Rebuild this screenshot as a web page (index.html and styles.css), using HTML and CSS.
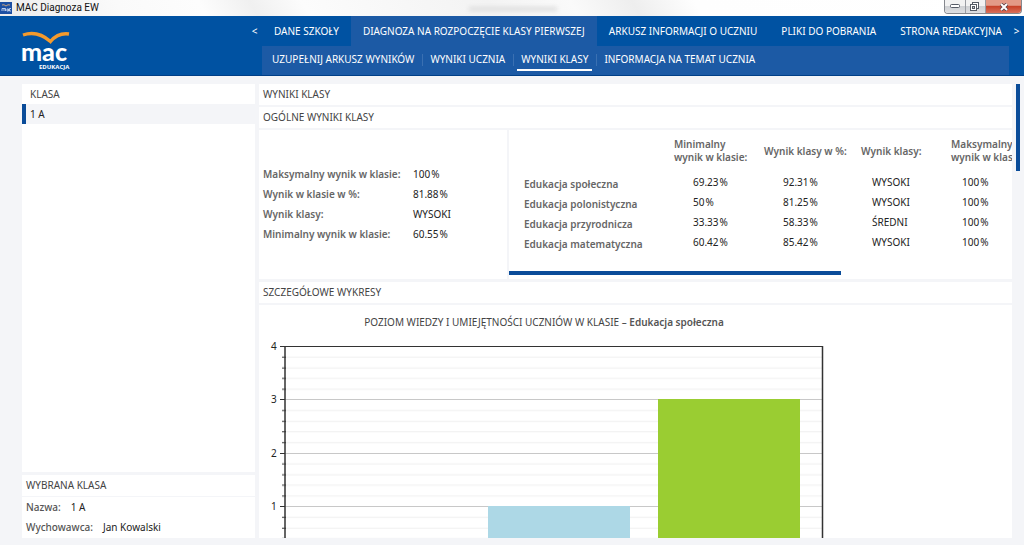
FILE: index.html
```html
<!DOCTYPE html>
<html lang="pl">
<head>
<meta charset="utf-8">
<title>MAC Diagnoza EW</title>
<link rel="stylesheet" href="styles.css">
</head>
<body>
<div class="titlebar">
  <svg class="app-icon" viewBox="0 0 12 12" aria-hidden="true"><rect width="12" height="12" fill="#1c4fa3"/><path d="M2 3q2-1 4 1q2-2 4-1" fill="none" stroke="#c9a27c"/><path d="M2 9V6.500h2V9M4 6.500h1.500V9M7 7h1.500v2H7zM11 6.500H9.500V9H11" fill="none" stroke="#dfe9fa" stroke-width=".8"/></svg>
  <span class="app-name">MAC Diagnoza EW</span>
  <span class="glass-smudge"></span>
  <div class="window-buttons">
    <button class="win-btn" type="button" aria-label="Minimalizuj"><svg width="10" height="5" viewBox="0 0 10 5"><rect x=".5" y=".5" width="9" height="3" rx="1" fill="#fff" stroke="#555b66"/></svg></button>
    <button class="win-btn" type="button" aria-label="Przywróć"><svg width="10" height="10" viewBox="0 0 10 10"><rect x="2.500" y=".5" width="6" height="6" fill="#fff" stroke="#555b66"/><rect x=".5" y="2.500" width="6" height="6" fill="#fff" stroke="#555b66"/><rect x="2.500" y="4.500" width="2" height="2" fill="#ccc" stroke="#555b66"/></svg></button>
    <button class="win-btn win-close" type="button" aria-label="Zamknij"><svg width="10" height="8" viewBox="0 0 10 8"><path d="M2 1l6 6M8 1L2 7" stroke="#5c4146" stroke-width="3.600"/><path d="M2 1l6 6M8 1L2 7" stroke="#fff" stroke-width="2"/></svg></button>
  </div>
</div>

<header class="header">
  <svg class="logo" width="50" height="42" viewBox="0 0 50 42" role="img" aria-label="mac edukacja">
    <path d="M1 4C10 1 20 3 28.500 10.500C34 4 40 2 47 3" fill="none" stroke="#f39a2d" stroke-width="3.400"/>
    <text class="logo-name" x="-1" y="30">mac</text>
    <text class="logo-sub" x="17" y="38">EDUKACJA</text>
  </svg>
  <button class="nav-arrow" type="button" aria-label="Poprzednie">&lt;</button>
  <div class="nav">
    <nav class="nav-main">
      <a href="#">DANE SZKOŁY</a>
      <a href="#" class="active">DIAGNOZA NA ROZPOCZĘCIE KLASY PIERWSZEJ</a>
      <a href="#">ARKUSZ INFORMACJI O UCZNIU</a>
      <a href="#">PLIKI DO POBRANIA</a>
      <a href="#">STRONA REDAKCYJNA</a>
    </nav>
    <nav class="nav-sub">
      <a href="#">UZUPEŁNIJ ARKUSZ WYNIKÓW</a>
      <a href="#">WYNIKI UCZNIA</a>
      <a href="#" class="current">WYNIKI KLASY</a>
      <a href="#">INFORMACJA NA TEMAT UCZNIA</a>
    </nav>
  </div>
  <button class="nav-arrow" type="button" aria-label="Następne">&gt;</button>
</header>

<div class="workspace">
  <aside class="sidebar">
    <section class="class-list">
      <h2 class="list-title">KLASA</h2>
      <a href="#" class="class-item">1 A</a>
    </section>
    <h2 class="bar side-bar">WYBRANA KLASA</h2>
    <dl class="class-info">
      <div><dt>Nazwa:</dt><dd>1 A</dd></div>
      <div><dt>Wychowawca:</dt><dd>Jan Kowalski</dd></div>
    </dl>
  </aside>

  <main class="content">
    <h1 class="bar">WYNIKI KLASY</h1>
    <h2 class="bar">OGÓLNE WYNIKI KLASY</h2>
    <div class="results">
      <dl class="summary">
        <dt>Maksymalny wynik w klasie:</dt><dd>100<span class="pct">%</span></dd>
        <dt>Wynik w klasie w %:</dt><dd>81.88<span class="pct">%</span></dd>
        <dt>Wynik klasy:</dt><dd>WYSOKI</dd>
        <dt>Minimalny wynik w klasie:</dt><dd>60.55<span class="pct">%</span></dd>
      </dl>
      <div class="details">
        <table class="scores">
          <thead>
            <tr><td class="col-name"></td><th class="col-a" scope="col">Minimalny<br>wynik w klasie:</th><th class="col-b" scope="col">Wynik klasy w %:</th><th class="col-a" scope="col">Wynik klasy:</th><th class="col-b" scope="col">Maksymalny<br>wynik w klasie:</th></tr>
          </thead>
          <tbody>
            <tr><th scope="row">Edukacja społeczna</th><td>69.23<span class="pct">%</span></td><td>92.31<span class="pct">%</span></td><td class="near">WYSOKI</td><td class="near">100<span class="pct">%</span></td></tr>
            <tr><th scope="row">Edukacja polonistyczna</th><td>50<span class="pct">%</span></td><td>81.25<span class="pct">%</span></td><td class="near">WYSOKI</td><td class="near">100<span class="pct">%</span></td></tr>
            <tr><th scope="row">Edukacja przyrodnicza</th><td>33.33<span class="pct">%</span></td><td>58.33<span class="pct">%</span></td><td class="near">ŚREDNI</td><td class="near">100<span class="pct">%</span></td></tr>
            <tr><th scope="row">Edukacja matematyczna</th><td>60.42<span class="pct">%</span></td><td>85.42<span class="pct">%</span></td><td class="near">WYSOKI</td><td class="near">100<span class="pct">%</span></td></tr>
          </tbody>
        </table>
        <div class="h-scroll"></div>
      </div>
    </div>
    <h2 class="bar">SZCZEGÓŁOWE WYKRESY</h2>
    <section class="chart">
      <h3 class="chart-title">POZIOM WIEDZY I UMIEJĘTNOŚCI UCZNIÓW W KLASIE – <b>Edukacja społeczna</b></h3>
      <svg class="plot" width="570" height="230" viewBox="0 0 570 230" role="img" aria-label="Edukacja społeczna">
        <defs>
          <pattern id="minor" x="0" y="6" width="570" height="53.400" patternUnits="userSpaceOnUse">
            <path class="grid-minor" d="M26 11.200h537M26 21.900h537M26 32.500h537M26 43.200h537"/>
            <path class="axis" d="M23 11.200h4M23 21.900h4M23 32.500h4M23 43.200h4"/>
          </pattern>
        </defs>
        <rect x="0" y="6" width="570" height="224" fill="url(#minor)"/>
        <path class="grid-major" d="M26 59.500h537M26 113.500h537M26 166.500h537"/>
        <rect x="229" y="166" width="142" height="70" fill="#add8e6"/>
        <rect x="399" y="59" width="142" height="180" fill="#9acd32"/>
        <path class="axis" d="M21 6.500h543M21 59.500h5M21 113.500h5M21 166.500h5"/>
        <path class="axis-y" d="M26 6v230M563.500 6v230"/>
        <text x="12" y="10">4</text>
        <text x="12" y="63">3</text>
        <text x="12" y="117">2</text>
        <text x="12" y="170">1</text>
      </svg>
    </section>
  </main>
  <div class="v-scroll"></div>
</div>
</body>
</html>
```
FILE: styles.css
```css
* { box-sizing: border-box; }

body {
  margin: 0;
  height: 100vh;
  display: flex;
  flex-direction: column;
  overflow: hidden;
  background: #f4f5f8;
  color: #222;
  font: 10px/16px "Noto Sans", "Open Sans", sans-serif;
}

h1, h2, h3, dl, dd { margin: 0; font-size: inherit; font-weight: 400; }
a { color: inherit; text-decoration: none; }
button { font: inherit; padding: 0; border: 0; }

/* Window title bar */
.titlebar {
  flex: none;
  display: flex;
  height: 16px;
  background: linear-gradient(60deg, #ececec 0, #fafafa 12%, #fdfdfd 20%, #f0f0f0 25%, #fcfcfc 30%, #f3f3f3 48%, #fafafa 56%, #eee 62%, #fefefe 68%, #fff 100%);
}
.app-icon { width: 12px; height: 12px; margin-top: 2px; }
.app-name { margin-left: 4px; color: #111; font-family: Roboto, sans-serif; }
.glass-smudge {
  width: 88px;
  height: 4px;
  margin: 7px auto 0 370px;
  background: #ddd;
  filter: blur(2px);
}
.window-buttons {
  display: flex;
  width: 78px;
  height: 14px;
  margin-right: 2px;
  border: 1px solid #85888e;
  border-top: 0;
  border-radius: 0 0 4px 4px;
  overflow: hidden;
}
.win-btn {
  display: flex;
  flex: 1;
  align-items: center;
  justify-content: center;
  border-right: 1px solid #9a9da3;
  background: linear-gradient(#f2f2f2 45%, #cfd1d4 50%, #dedfe2);
}
.win-close { flex: 0 0 35px; border: 0; background: linear-gradient(#e39a87 40%, #c8432a 50%, #d9705a); }

/* Header */
.header {
  flex: none;
  display: flex;
  color: #fff;
  background: #0052a2;
  border-bottom: 1px solid #003f87;
}
.logo { flex: none; margin: 15px 175px 2px 22px; overflow: visible; }
.logo-name { font: 900 25px Lato, sans-serif; fill: #fff; }
.logo-sub { font: 700 6px "Open Sans", sans-serif; fill: #fff; }
.nav-arrow { flex: none; width: 15px; height: 30px; color: #fff; background: none; }
.nav { flex: 1; min-width: 0; }
.nav-main, .nav-sub { display: flex; white-space: nowrap; }
.nav-main a { padding: 7px 12px; }
.nav-main .active { background: #1c5aa5; }
.nav-sub { height: 29px; padding: 5px 2px; background: #1c5aa5; }
.nav-sub a { position: relative; height: 20px; margin: 0 4px; padding: 0 4px; }
.nav-sub a + a::before {
  content: "";
  position: absolute;
  left: -4px;
  top: 3px;
  height: 12px;
  border-left: 1px solid #3a70b2;
}
.nav-sub .current { border-bottom: 2px solid #fff; }

/* Workspace */
.workspace {
  flex: 1;
  min-height: 0;
  display: flex;
  gap: 4px;
  padding: 8px 4px 7px 22px;
}
.sidebar { flex: 0 0 233px; display: flex; flex-direction: column; }
.class-list { flex: 1; margin-bottom: 3px; background: #fff; }
.list-title { padding: 2px 8px; color: #444; }
.class-item {
  display: block;
  padding: 2px 4px;
  border-left: 4px solid #0a4c99;
  background: #f4f5f8;
}
.bar { flex: none; height: 21px; padding: 2px 4px; background: #fff; color: #444; }
.side-bar { margin-bottom: 1px; }
.class-info { padding-bottom: 1px; background: #fff; }
.class-info div { display: flex; gap: 10px; padding: 2px 4px; }
.class-info dt { color: #555; font-weight: 500; }

.content { flex: 1; min-width: 0; display: flex; flex-direction: column; gap: 2px; }
.results { flex: none; display: flex; gap: 2px; min-height: 149px; margin-bottom: 1px; }
.summary {
  flex: 0 0 248px;
  display: grid;
  grid-template-columns: 150px 1fr;
  grid-auto-rows: 20px;
  align-content: center;
  padding: 2px 4px 0;
  background: #fff;
}
.summary dt, .scores th { color: #666; font-weight: 600; }
.pct { margin-left: 1px; }

.details { flex: 1; min-width: 0; overflow: hidden; padding: 6px 0 0 15px; background: #fff; }
.scores { width: 524px; table-layout: fixed; border-collapse: collapse; text-align: left; }
.scores td, .scores th { padding: 0; white-space: nowrap; }
.scores thead th { height: 30px; line-height: 13px; }
.scores .col-name { width: 150px; }
.scores .col-a { width: 90px; }
.scores .col-b { width: 97px; }
.scores tbody th { padding: 3px 0 1px; }
.scores tbody td { padding: 1px 0 3px 19px; }
.scores tbody td.near { padding-left: 11px; }
.scores tbody::before { content: ""; display: block; height: 7px; }
.h-scroll { width: 68%; height: 4px; margin: 18px 0 0 -15px; background: #0a4c99; }

.chart { flex: 1; min-height: 0; overflow: hidden; background: #fff; }
.chart-title { width: 570px; padding-top: 9px; text-align: center; color: #444; }
.chart-title b { font-weight: 600; color: #555; }
.plot { display: block; margin-top: 10px; }
.plot text { fill: #222; }
.grid-minor { stroke: #efefef; }
.grid-major { stroke: #c8c8c8; }
.axis { stroke: #333; }
.axis-y { stroke: #333; stroke-width: 1.5; }

.v-scroll { width: 4px; height: 87px; background: #0a4c99; }
```
